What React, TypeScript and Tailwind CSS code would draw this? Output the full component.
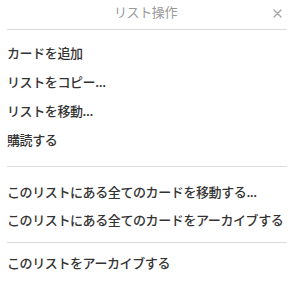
const groups = [
  ["カードを追加", "リストをコピー...", "リストを移動...", "購読する"],
  ["このリストにある全てのカードを移動する...", "このリストにある全てのカードをアーカイブする"],
  ["このリストをアーカイブする"],
];

export default function App() {
  return (
    <div
      className="w-[296px] h-[291px] bg-white text-[13px] text-[#333] tracking-[-0.4px]"
      style={{ fontFamily: '"Noto Sans CJK JP", "Noto Sans", sans-serif' }}
    >
      <div className="relative h-[29px] flex items-center justify-center">
        <span className="text-[#999] pr-[5px] -mt-[6px]">リスト操作</span>
        <button className="absolute left-[272px] top-[8px] w-[11px] h-[11px] flex items-center justify-center">
          <svg width="9" height="9" viewBox="0 0 9 9" fill="none">
            <path d="M1 1L8 8M8 1L1 8" stroke="#a6a6a6" strokeWidth="1.4" strokeLinecap="round" />
          </svg>
        </button>
      </div>
      <div className="ml-[7px] w-[280px] h-px bg-[#dcdcdc]" />

      <ul className="pt-[8px] font-medium">
        {groups[0].map((label) => (
          <li key={label} className="h-[29px] flex items-center pl-[7px] cursor-pointer">
            {label}
          </li>
        ))}
      </ul>
      <div className="ml-[7px] mt-[12px] w-[280px] h-px bg-[#dcdcdc]" />

      <ul className="pt-[11px] font-medium">
        {groups[1].map((label) => (
          <li key={label} className="h-[28px] flex items-center pl-[7px] cursor-pointer">
            {label}
          </li>
        ))}
      </ul>
      <div className="ml-[7px] mt-[8px] w-[280px] h-px bg-[#dcdcdc]" />

      <ul className="pt-[6px] font-medium">
        {groups[2].map((label) => (
          <li key={label} className="h-[28px] flex items-center pl-[7px] cursor-pointer">
            {label}
          </li>
        ))}
      </ul>
    </div>
  );
}
